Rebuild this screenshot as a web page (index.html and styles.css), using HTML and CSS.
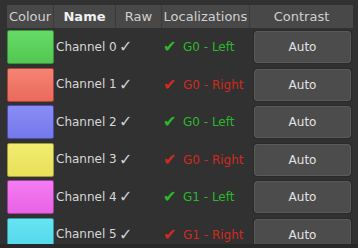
FILE: index.html
```html
<!DOCTYPE html>
<html>
<head>
<meta charset="utf-8">
<link rel="stylesheet" href="styles.css">
</head>
<body>
<div class="view">
  <div class="grid head">
    <div class="hc">Colour</div>
    <div class="hc bold">Name</div>
    <div class="hc">Raw</div>
    <div class="hc">Localizations</div>
    <div class="hc last">Contrast</div>
  </div>
  <div class="rows">
    <div class="grid row">
      <div class="sw green"></div>
      <div class="name">Channel 0</div>
      <div class="raw">✓</div>
      <div class="loc ok"><span class="ck">✔</span>G0 - Left</div>
      <div class="cc"><button class="btn">Auto</button></div>
    </div>
    <div class="grid row">
      <div class="sw red"></div>
      <div class="name">Channel 1</div>
      <div class="raw">✓</div>
      <div class="loc bad"><span class="ck">✔</span>G0 - Right</div>
      <div class="cc"><button class="btn">Auto</button></div>
    </div>
    <div class="grid row">
      <div class="sw blue"></div>
      <div class="name">Channel 2</div>
      <div class="raw">✓</div>
      <div class="loc ok"><span class="ck">✔</span>G0 - Left</div>
      <div class="cc"><button class="btn">Auto</button></div>
    </div>
    <div class="grid row">
      <div class="sw yellow"></div>
      <div class="name">Channel 3</div>
      <div class="raw">✓</div>
      <div class="loc bad"><span class="ck">✔</span>G0 - Right</div>
      <div class="cc"><button class="btn">Auto</button></div>
    </div>
    <div class="grid row">
      <div class="sw magenta"></div>
      <div class="name">Channel 4</div>
      <div class="raw">✓</div>
      <div class="loc ok"><span class="ck">✔</span>G1 - Left</div>
      <div class="cc"><button class="btn">Auto</button></div>
    </div>
    <div class="grid row">
      <div class="sw cyan"></div>
      <div class="name">Channel 5</div>
      <div class="raw">✓</div>
      <div class="loc bad"><span class="ck">✔</span>G1 - Right</div>
      <div class="cc"><button class="btn">Auto</button></div>
    </div>
  </div>
</div>
</body>
</html>
```
FILE: styles.css
```css
html, body {
  margin: 0;
  padding: 0;
  background: #2c2c2c;
  width: 358px;
  height: 248px;
  overflow: hidden;
  font-family: "DejaVu Sans", sans-serif;
  font-size: 13px;
  color: #d8d8d8;
}
.view {
  padding: 5px 5px 0 7px;
  height: 239px;
  overflow: hidden;
  background: #313131;
  border-bottom: 4px solid #282828;
}
.grid {
  display: grid;
  grid-template-columns: 47px 62px 46px 88px 103px;
}
.head {
  height: 23px;
  background: #484848;
}
.hc {
  display: flex;
  align-items: center;
  justify-content: center;
  border-right: 1px solid #3a3a3a;
  color: #d0d0d0;
  white-space: nowrap;
  overflow: hidden;
}
.hc.last { border-right: none; }
.bold { font-weight: bold; color: #f0f0f0; }
.row {
  height: 37.5px;
  align-items: center;
  font-size: 12px;
}
.sw {
  height: 34px;
  border: 1px solid;
  border-radius: 2px;
  box-sizing: border-box;
  margin-top: 1px;
}
.green { background: linear-gradient(#66da66, #52c852); border-color: #3c8f3c; }
.red { background: linear-gradient(#f48474, #ea6a5c); border-color: #a8443a; }
.blue { background: linear-gradient(#8a8cf6, #7478ea); border-color: #4a4ca8; }
.yellow { background: linear-gradient(#f2ec70, #e8e05a); border-color: #a09a3a; }
.magenta { background: linear-gradient(#f47cf2, #e862e6); border-color: #a040a0; }
.cyan { background: linear-gradient(#66e4f2, #50d6ea); border-color: #3a96a4; }
.name {
  padding-left: 2px;
  white-space: nowrap;
}
.raw {
  padding-left: 3px;
  font-size: 16px;
  color: #cfcfcf;
}
.loc {
  white-space: nowrap;
  padding-left: 1px;
}
.ck {
  display: inline-block;
  width: 20px;
  font-size: 16px;
  vertical-align: -1px;
}
.ok { color: #2ab82a; }
.bad { color: #d02a20; }
.cc {
  padding-left: 4px;
  padding-right: 2px;
}
.btn {
  display: block;
  width: 97px;
  height: 32px;
  margin-top: 1px;
  background: #4c4c4c;
  border: 1px solid #5a5a5a;
  border-radius: 3px;
  color: #e2e2e2;
  font-family: "DejaVu Sans", sans-serif;
  font-size: 12px;
  box-shadow: 0 0 0 1px #2a2a2a;
}
```
